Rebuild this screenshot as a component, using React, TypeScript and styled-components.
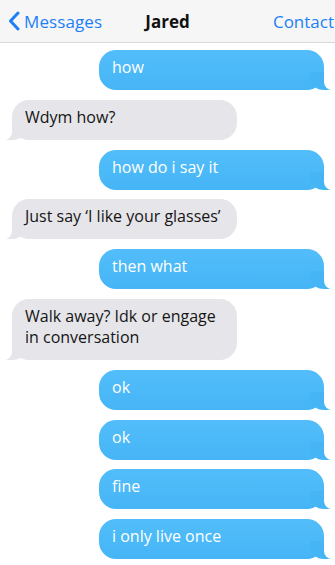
import React, { FC } from 'react'
import styled, { createGlobalStyle, css } from 'styled-components'

const GlobalStyle = createGlobalStyle`
  html, body {
    margin: 0;
    padding: 0;
    background: #ffffff;
  }
  body {
    font-family: 'Open Sans', 'Noto Sans', sans-serif;
  }
`

const StyledScreen = styled.div`
  display: flex;
  flex-direction: column;
  width: 335px;
  height: 565px;
  overflow: hidden;
  background: #ffffff;
`

const StyledHeader = styled.header`
  display: grid;
  grid-template-columns: 1fr auto 1fr;
  align-items: center;
  height: 42px;
  flex-shrink: 0;
  background: #f6f6f6;
  border-bottom: 1px solid #d9d9d9;
  overflow: hidden;
`

const StyledBack = styled.div`
  display: flex;
  align-items: center;
  gap: 4px;
  padding-left: 8px;
  color: #1b80f6;
  font-size: 17px;
  letter-spacing: 0.1px;
`

const StyledTitle = styled.h1`
  margin: 0;
  color: #111111;
  font-size: 17px;
  font-weight: 700;
`

const StyledAction = styled.div`
  justify-self: end;
  padding-right: 1px;
  color: #1b80f6;
  font-size: 17px;
  white-space: nowrap;
`

const StyledThread = styled.div`
  display: flex;
  flex-direction: column;
  gap: 9.8px;
  padding: 7px 11px 0 12px;
`

const StyledBubble = styled.div<{ $mine: boolean }>`
  position: relative;
  box-sizing: border-box;
  width: 225px;
  padding: 7px 13px 12px;
  border-radius: 17px;
  font-size: 16px;
  line-height: 21px;

  ${({ $mine }) => $mine
    ? css`
      align-self: flex-end;
      color: #ffffff;
      background: linear-gradient(#52bdfa, #46b5f6);
      &::before {
        content: '';
        position: absolute;
        right: -6px;
        bottom: 0;
        width: 20px;
        height: 18px;
        background: #46b5f6;
        border-bottom-left-radius: 14px 12px;
      }
      &::after {
        content: '';
        position: absolute;
        right: -12px;
        bottom: 0;
        width: 12px;
        height: 20px;
        background: #ffffff;
        border-bottom-left-radius: 8px;
      }
    `
    : css`
      align-self: flex-start;
      color: #151515;
      background: #e6e5ea;
      &::before {
        content: '';
        position: absolute;
        left: -6px;
        bottom: 0;
        width: 20px;
        height: 18px;
        background: #e6e5ea;
        border-bottom-right-radius: 14px 12px;
      }
      &::after {
        content: '';
        position: absolute;
        left: -12px;
        bottom: 0;
        width: 12px;
        height: 20px;
        background: #ffffff;
        border-bottom-right-radius: 8px;
      }
    `}
`

const StyledText = styled.span`
  position: relative;
  z-index: 1;
`

const Chevron: FC = () => (
  <svg width="12" height="20" viewBox="0 0 12 20">
    <path d="M10 2 L2.5 10 L10 18" fill="none" stroke="#1b80f6" strokeWidth="3" strokeLinecap="round" strokeLinejoin="round" />
  </svg>
)

const messages: { mine: boolean; text: string }[] = [
  { mine: true, text: 'how' },
  { mine: false, text: 'Wdym how?' },
  { mine: true, text: 'how do i say it' },
  { mine: false, text: 'Just say \u2018I like your glasses\u2019' },
  { mine: true, text: 'then what' },
  { mine: false, text: 'Walk away? Idk or engage in conversation' },
  { mine: true, text: 'ok' },
  { mine: true, text: 'ok' },
  { mine: true, text: 'fine' },
  { mine: true, text: 'i only live once' },
]

const App: FC = () => {
  return (
    <StyledScreen>
      <GlobalStyle />

      <StyledHeader>
        <StyledBack>
          <Chevron />
          <span>Messages</span>
        </StyledBack>
        <StyledTitle>Jared</StyledTitle>
        <StyledAction>Contact</StyledAction>
      </StyledHeader>

      <StyledThread>
        {messages.map((m, i) => (
          <StyledBubble key={i} $mine={m.mine}>
            <StyledText>{m.text}</StyledText>
          </StyledBubble>
        ))}
      </StyledThread>
    </StyledScreen>
  )
}

export default App
